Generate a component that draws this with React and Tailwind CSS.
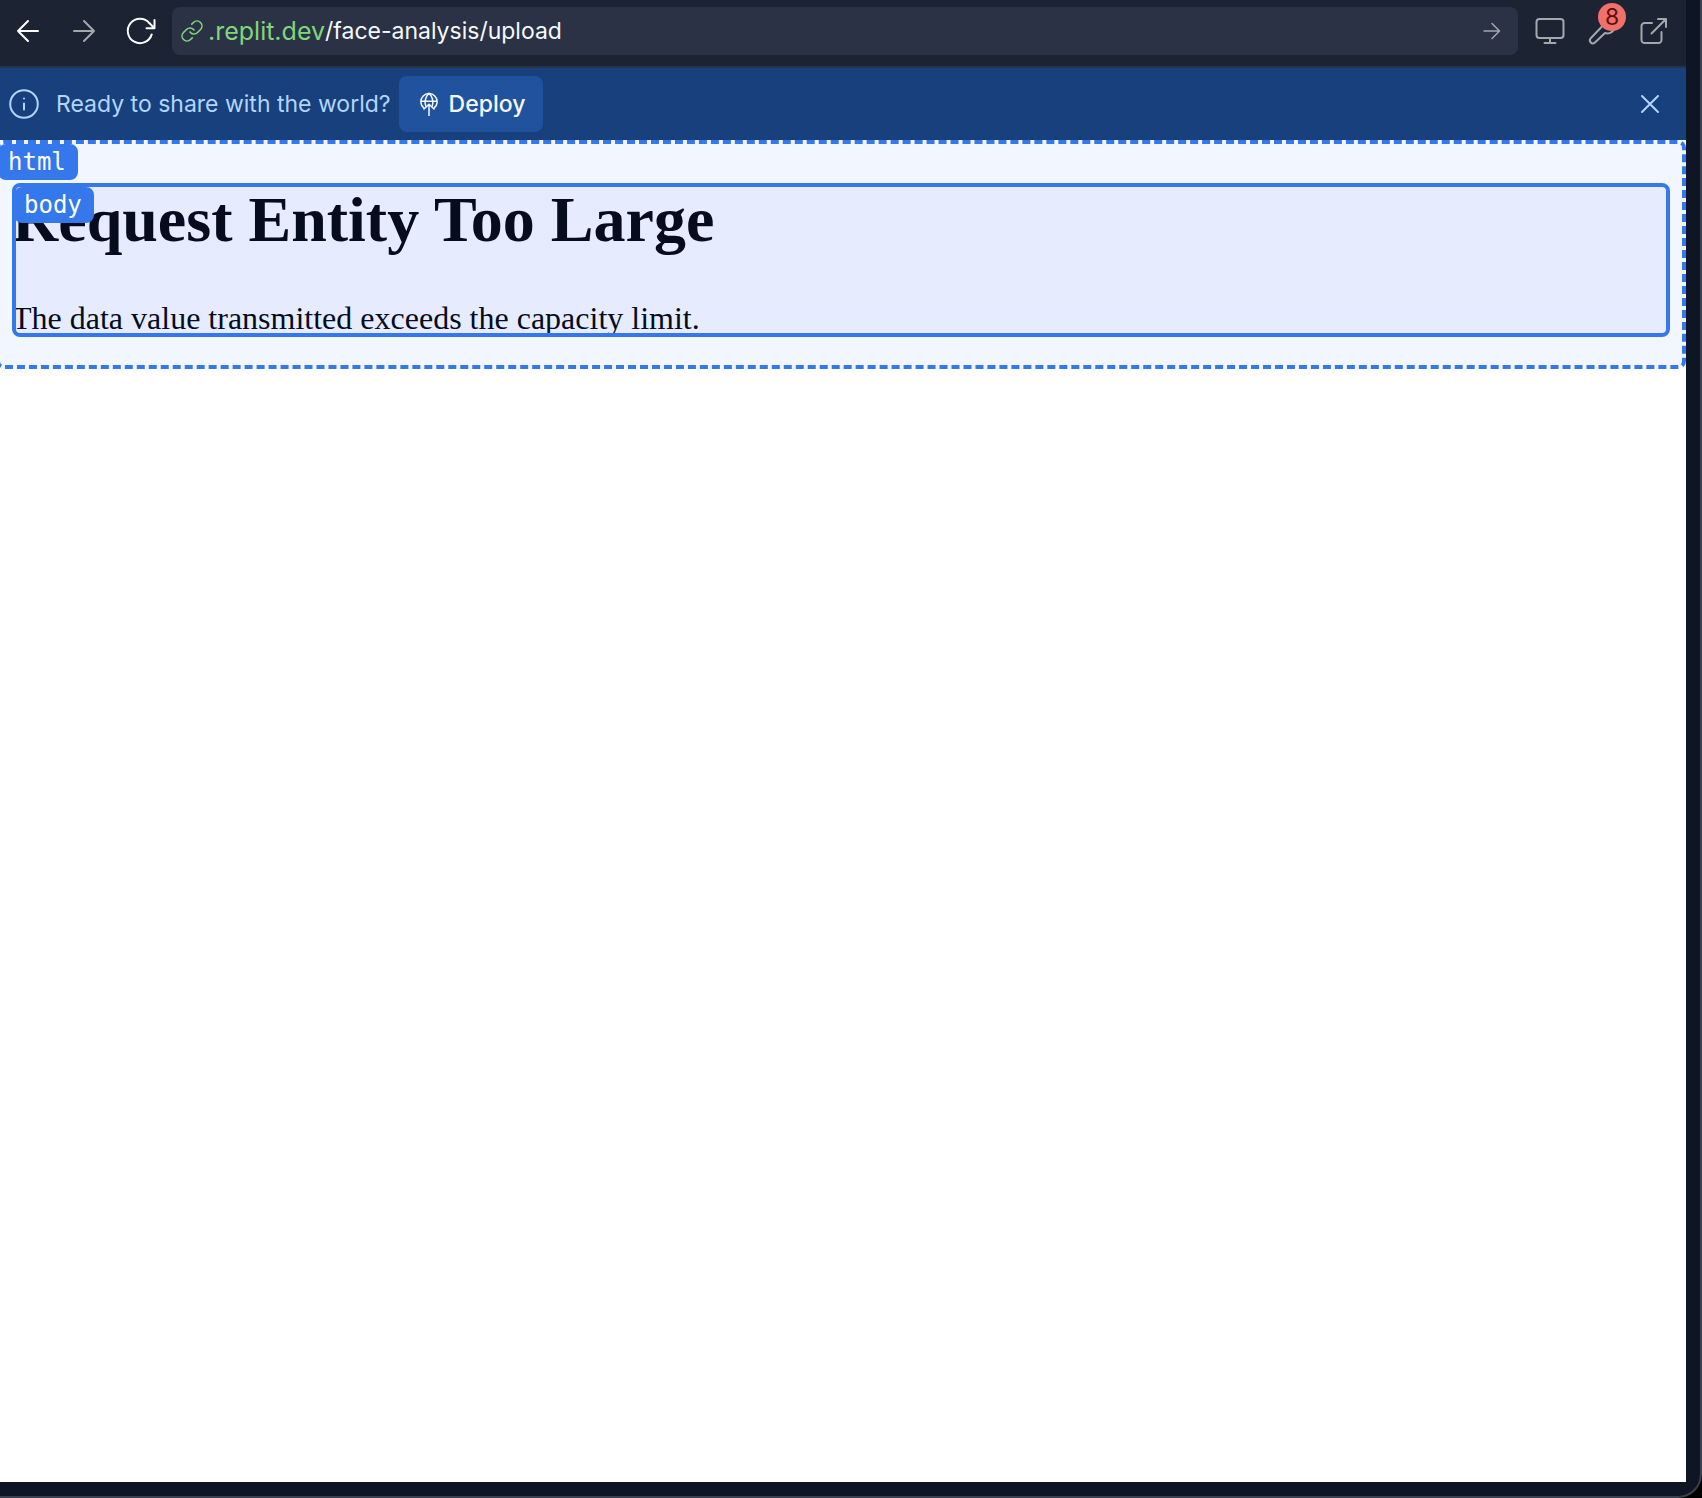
function Icon({ size = 32, box = 32, stroke = 2, className = "", children }) {
  return (
    <svg
      width={size}
      height={size}
      viewBox={`0 0 ${box} ${box}`}
      fill="none"
      stroke="currentColor"
      strokeWidth={stroke}
      strokeLinecap="round"
      strokeLinejoin="round"
      className={"shrink-0 " + className}
      aria-hidden="true"
    >
      {children}
    </svg>
  );
}

function Toolbar() {
  return (
    <header className="flex h-[68px] items-start border-b-2 border-[#2b3245] bg-[#1c2333] pt-[7px] pr-4 text-[#a3a8ad]">
      <div className="flex h-12 w-[172px] items-center gap-6 pl-3">
        <button type="button" aria-label="Back" className="text-white">
          <Icon>
            <path d="M26 16H6M16 6L6 16l10 10" />
          </Icon>
        </button>
        <button type="button" aria-label="Forward">
          <Icon>
            <path d="M6 16h20M16 6l10 10-10 10" />
          </Icon>
        </button>
        <button type="button" aria-label="Reload" className="text-white">
          <Icon>
            <path d="M30.500 5v8.300h-8M30.500 13.300L25.500 8.300A12.200 12.200 0 1 0 27.700 19.400" />
          </Icon>
        </button>
      </div>
      <form className="flex h-12 flex-1 items-center rounded-lg bg-[#2b3245] pr-[14px] pl-2 text-[23px] leading-8">
        <label htmlFor="path" className="flex items-center gap-1 text-[25px] text-[#80d67b]">
          <Icon size={24} box={24} stroke={1.6}>
            <path d="M10 13a5 5 0 0 0 7.540.540l3-3a5 5 0 0 0-7.070-7.070l-1.720 1.710" />
            <path d="M14 11a5 5 0 0 0-7.540-.540l-3 3a5 5 0 0 0 7.070 7.070l1.710-1.710" />
          </Icon>
          <span>.replit.dev</span>
        </label>
        <input
          id="path"
          type="text"
          defaultValue="/face-analysis/upload"
          className="min-w-0 flex-1 bg-transparent text-[#f5f9fc] outline-none"
        />
        <button type="submit" aria-label="Go">
          <Icon size={24} box={24} stroke={1.5}>
            <path d="M4 12h15M12 4.500l7.500 7.500-7.500 7.500" />
          </Icon>
        </button>
      </form>
      <div className="flex h-12 items-center gap-5 pl-4">
        <button type="button" aria-label="Screen size">
          <Icon>
            <rect x="2.500" y="4" width="27" height="19" rx="3" />
            <path d="M16 23v5M10.500 28h11" />
          </Icon>
        </button>
        <button type="button" aria-label="Developer tools, 8 messages" className="relative">
          <Icon>
            <path d="M15.500 12L4.500 23.500a3 3 0 0 0 4.200 4.200L19 18a8 8 0 0 0 9-3.500" />
          </Icon>
          <span className="absolute -top-3 left-3 flex size-7 items-center justify-center rounded-full bg-[#f0706a] text-[23px] leading-7 text-[#5c0f0f]">
            8
          </span>
        </button>
        <button type="button" aria-label="Open in new tab">
          <Icon>
            <path d="M14 8H6.500a3 3 0 0 0-3 3v14a3 3 0 0 0 3 3h14a3 3 0 0 0 3-3v-8M20 4h8v8M28 4L13.500 18.500" />
          </Icon>
        </button>
      </div>
    </header>
  );
}

function Banner() {
  return (
    <section className="flex h-[72px] items-center bg-[#18407d] pr-5 pl-2 text-[23px] leading-8 text-[#b2d5ff]">
      <Icon>
        <circle cx="16" cy="16" r="13.800" />
        <path d="M16 15.500v6M16 10.500v.1" />
      </Icon>
      <p className="pl-4">Ready to share with the world?</p>
      <button
        type="button"
        className="ml-2 flex h-14 items-center gap-2 rounded-lg bg-[#20529e] px-[18px] font-medium text-[#f5f9fc]"
      >
        <Icon size={24} box={24} stroke={1.500}>
          <path d="M7 16.200A8.200 8.200 0 1 1 17 16.200M4 9.200h16" />
          <path d="M8.800 14C7.300 9.500 8.500 4 12 1.300c3.500 2.700 4.700 8.200 3.200 12.700" />
          <path d="M12 23.500V12.500M7 17l5-4.800 5 4.800" />
        </Icon>
        Deploy
      </button>
      <button type="button" aria-label="Dismiss" className="ml-auto">
        <Icon>
          <path d="M8 8l16 16M24 8L8 24" />
        </Icon>
      </button>
    </section>
  );
}

function Tag({ children }) {
  return (
    <span className="absolute top-0 -left-0.5 rounded-lg bg-[#3478eb] pr-3 pl-2.5 font-['DejaVu_Sans_Mono',monospace] text-[24px] leading-9 text-white">
      {children}
    </span>
  );
}

function Preview() {
  return (
    <main className="flex-1 overflow-hidden bg-white font-['Liberation_Serif',serif] text-[#050c1c]">
      <div className="relative -ml-1 rounded-lg border-4 border-dashed border-[#3478eb] bg-[#f1f6ff] pt-[39px] pr-3 pb-7 pl-3">
        <Tag>html</Tag>
        <div className="relative h-[154px] overflow-hidden rounded-lg border-4 border-[#3478eb] bg-[#e6ecfd]">
          <div className="-ml-1">
            <h1 className="text-[64px] leading-[66px] font-bold">Request Entity Too Large</h1>
            <p className="pt-[47px] text-[32px] leading-9">
              The data value transmitted exceeds the capacity limit.
            </p>
          </div>
          <Tag>body</Tag>
        </div>
      </div>
    </main>
  );
}

export default function App() {
  return (
    <div className="flex min-h-screen bg-black font-['Inter',sans-serif]">
      <div className="flex min-w-0 flex-1 flex-col rounded-br-3xl border-r-2 border-b-2 border-[#3c3f4c] bg-[#0e1525] pr-[14px] pb-[14px]">
        <Toolbar />
        <Banner />
        <Preview />
      </div>
    </div>
  );
}
